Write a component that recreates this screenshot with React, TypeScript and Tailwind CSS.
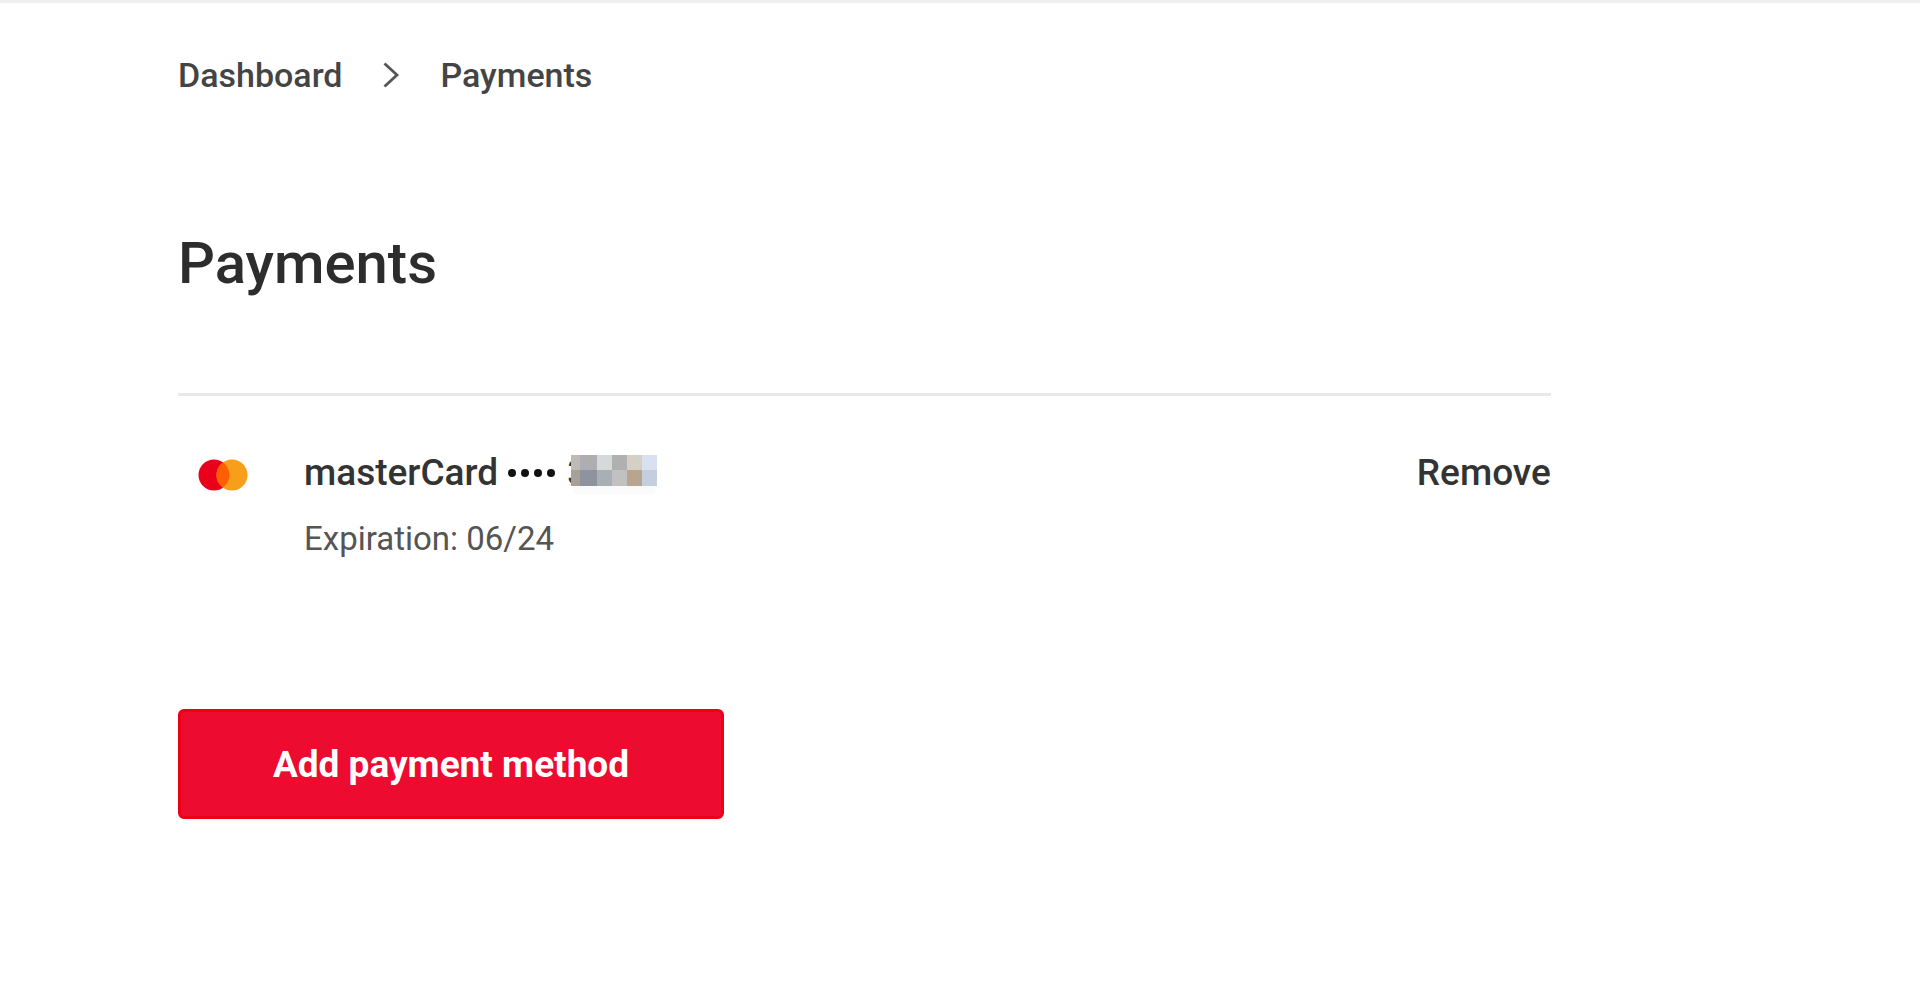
import React from "react";

const maskCells = [
  "bg-[#bdbab8]", "bg-[#aeaeb2]", "bg-[#d5d9da]", "bg-[#b0b0b0]", "bg-[#d6cfc6]", "bg-[#d9e0f0]",
  "bg-[#a5a198]", "bg-[#8e939d]", "bg-[#a9b0b4]", "bg-[#c1c1c1]", "bg-[#b9a58f]", "bg-[#c3cede]",
];

function Breadcrumb() {
  return (
    <nav aria-label="Breadcrumb" className="flex items-center text-[34px] leading-10 font-medium text-[#444]">
      <a href="#dashboard">Dashboard</a>
      <svg aria-hidden="true" viewBox="0 0 18 28" className="mx-10 h-7 w-[18px]" fill="none" stroke="#555" strokeWidth="2.8">
        <path d="M1.5 2.5 14 14 1.5 25.5" />
      </svg>
      <a href="#payments" aria-current="page">Payments</a>
    </nav>
  );
}

function MastercardLogo() {
  return (
    <svg role="img" aria-label="Mastercard" viewBox="0 0 50 32" className="mt-[6px] h-8 w-[50px]">
      <circle cx="16" cy="16" r="15.5" fill="#eb001b" />
      <circle cx="34" cy="16" r="15.5" fill="#f79e1b" />
      <path d="M25 3.4a15.5 15.5 0 0 1 0 25.2a15.5 15.5 0 0 1 0-25.2Z" fill="#ff5f00" />
    </svg>
  );
}

function CardNumberMask() {
  return (
    <span className="relative mb-1.5 flex h-[31px] w-[90px] justify-end">
      <span className="absolute -top-0.5 left-0 leading-10">3</span>
      <span aria-hidden="true" className="relative grid h-[31px] w-[86px] grid-cols-[9fr_17fr_15fr_15fr_15fr_15fr] grid-rows-2 shadow-[0_10px_2px_-2px_#fafafa]">
        {maskCells.map((cell, i) => (
          <span key={i} className={cell} />
        ))}
      </span>
    </span>
  );
}

export default function App() {
  return (
    <div className="min-h-screen border-t-[3px] border-[#efefef] bg-white font-['Roboto',sans-serif]">
      <main className="ml-[178px] w-[71.5%]">
        <div className="pt-[52px]">
          <Breadcrumb />
        </div>
        <h1 className="mt-[136px] text-[58px] leading-16 font-medium text-[#2d2d2d]">Payments</h1>
        <section className="mt-[98px] border-t-[3px] border-[#e8e8e8] pt-[57px]">
          <div className="flex items-start">
            <div className="w-[126px] pl-5">
              <MastercardLogo />
            </div>
            <div className="grow">
              <div className="flex h-10 items-center text-[37px] leading-10 font-medium text-[#333]">
                <span>masterCard</span>
                <span aria-hidden="true" className="mr-3 ml-2.5 flex gap-[5px]">
                  <span className="size-2 rounded-full bg-[#111]" />
                  <span className="size-2 rounded-full bg-[#111]" />
                  <span className="size-2 rounded-full bg-[#111]" />
                  <span className="size-2 rounded-full bg-[#111]" />
                </span>
                <CardNumberMask />
              </div>
              <p className="mt-[26px] text-[33px] leading-10 text-[#555]">Expiration: 06/24</p>
            </div>
            <button type="button" className="text-[37px] leading-10 font-medium text-[#333]">Remove</button>
          </div>
        </section>
        <button type="button" className="mt-[150px] h-[110px] w-[546px] rounded-md border-[3px] border-[#ed0014] bg-[#ed0b2f] pt-0.5 text-[37px] leading-12 font-bold text-white">
          Add payment method
        </button>
      </main>
    </div>
  );
}
